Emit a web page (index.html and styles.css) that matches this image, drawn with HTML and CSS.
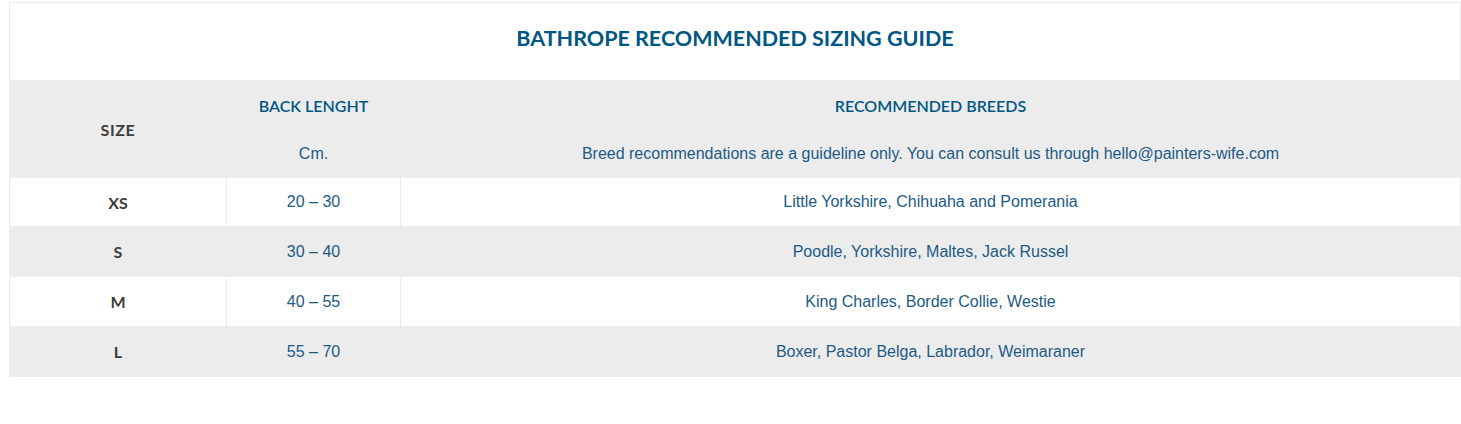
FILE: index.html
```html
<!DOCTYPE html>
<html lang="en">
<head>
<meta charset="utf-8">
<title>Bathrope sizing guide</title>
<link rel="stylesheet" href="styles.css">
</head>
<body>
<div class="wrap">
  <table class="guide">
    <colgroup>
      <col class="c-size">
      <col class="c-len">
      <col class="c-breed">
    </colgroup>
    <thead>
      <tr class="title-row">
        <th colspan="3" class="title">BATHROPE RECOMMENDED SIZING GUIDE</th>
      </tr>
      <tr class="head-row top">
        <th rowspan="2" class="size-h">SIZE</th>
        <th class="col-h">BACK LENGHT</th>
        <th class="col-h">RECOMMENDED BREEDS</th>
      </tr>
      <tr class="head-row sub">
        <td class="sub-h">Cm.</td>
        <td class="sub-h">Breed recommendations are a guideline only. You can consult us through hello@painters-wife.com</td>
      </tr>
    </thead>
    <tbody>
      <tr>
        <td class="size">XS</td>
        <td>20 – 30</td>
        <td>Little Yorkshire, Chihuaha and Pomerania</td>
      </tr>
      <tr>
        <td class="size">S</td>
        <td>30 – 40</td>
        <td>Poodle, Yorkshire, Maltes, Jack Russel</td>
      </tr>
      <tr>
        <td class="size">M</td>
        <td>40 – 55</td>
        <td>King Charles, Border Collie, Westie</td>
      </tr>
      <tr>
        <td class="size">L</td>
        <td>55 – 70</td>
        <td>Boxer, Pastor Belga, Labrador, Weimaraner</td>
      </tr>
    </tbody>
  </table>
</div>
</body>
</html>
```

FILE: styles.css
```css
html, body {
  margin: 0;
  padding: 0;
  background: #ffffff;
}

.wrap {
  padding: 2px 0 0 9px;
}

.guide {
  width: 1452px;
  border-collapse: collapse;
  table-layout: fixed;
  font-family: "Liberation Sans", Arial, sans-serif;
  font-size: 16px;
  color: #1d5a85;
}

.c-size { width: 217px; }
.c-len { width: 174px; }

.guide th,
.guide td {
  border: 1px solid #ebebeb;
  text-align: center;
  vertical-align: middle;
  padding: 0;
}

.guide th.title {
  height: 55px;
  padding-top: 22px;
  vertical-align: top;
  line-height: 26px;
  font-family: "Lato", "Liberation Sans", sans-serif;
  font-weight: 700;
  font-size: 21.5px;
  color: #005783;
}

.head-row th,
.head-row td {
  background: #ececec;
  border-color: #ececec;
}

.head-row.top th {
  height: 48px;
}

.head-row.sub td {
  height: 47px;
}

.size-h {
  font-family: "Lato", "Liberation Sans", sans-serif;
  font-weight: 700;
  font-size: 16px;
  letter-spacing: 0.6px;
  color: #3c3c3c;
}

.col-h {
  font-family: "Lato", "Liberation Sans", sans-serif;
  font-weight: 600;
  font-size: 16px;
  color: #005783;
}

.sub-h {
  color: #1d5a85;
}

tbody td {
  height: 49px;
}

tbody tr:first-child td {
  height: 48px;
}

tbody tr:nth-child(even) td {
  background: #ececec;
  border-color: #ececec;
}

.size {
  font-family: "Lato", "Liberation Sans", sans-serif;
  font-weight: 700;
  color: #3c3c3c;
}
```
